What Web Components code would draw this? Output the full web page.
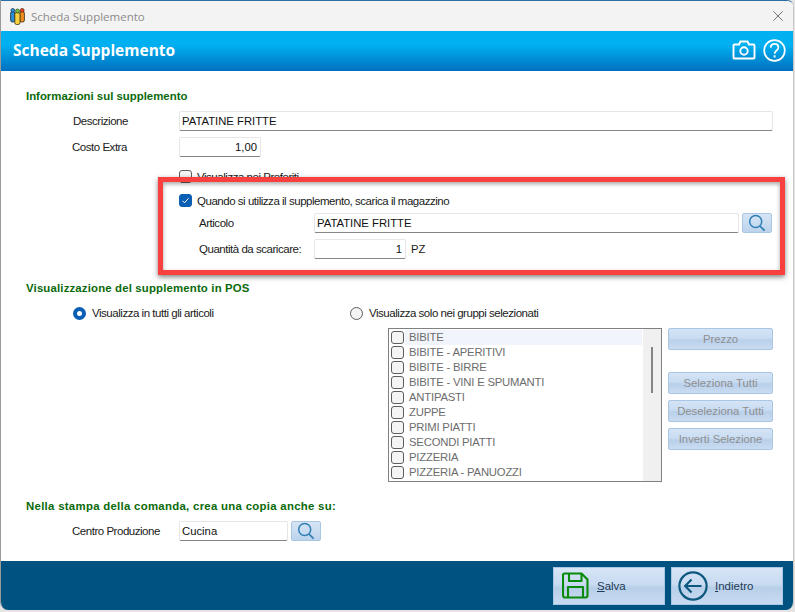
<!DOCTYPE html>
<html lang="it"><head><meta charset="utf-8"><title>Scheda Supplemento</title>
<style>
html,body{margin:0;padding:0;background:#e4e4e4;}
body{width:795px;height:612px;overflow:hidden;font:11.3px "Liberation Sans",Arial,sans-serif;color:#1a1a1a;}
</style></head><body>
<x-window>
  <x-titlebar slot="title">Scheda Supplemento</x-titlebar>
  <x-header slot="header">Scheda Supplemento</x-header>

  <x-section>Informazioni sul supplemento</x-section>
  <x-row h="20" top="8"><x-label w="106" x="47">Descrizione</x-label><x-input w="594">PATATINE FRITTE</x-input></x-row>
  <x-row h="20" top="6"><x-label w="107" x="46">Costo Extra</x-label><x-input w="82" align="right">1,00</x-input></x-row>
  <x-row h="13" top="13"><x-check style="margin-left:153px">Visualizza nei Preferiti</x-check></x-row>
  <x-row h="13" top="11"><x-check checked style="margin-left:153px">Quando si utilizza il supplemento, scarica il magazzino</x-check></x-row>
  <x-row h="20" top="6"><x-label w="115" x="173">Articolo</x-label><x-input w="425">PATATINE FRITTE</x-input><x-search></x-search></x-row>
  <x-row h="20" top="6"><x-label w="115" x="173">Quantità da scaricare:</x-label><x-input w="92" align="right">1</x-input><x-unit>PZ</x-unit></x-row>

  <x-section style="margin-top:22px;letter-spacing:.16px">Visualizzazione del supplemento in POS</x-section>
  <x-row h="14" top="11"><x-radio checked style="margin-left:47px;width:277px">Visualizza in tutti gli articoli</x-radio><x-radio>Visualizza solo nei gruppi selezionati</x-radio></x-row>
  <x-groups>
    <x-listbox>
      <x-item active>BIBITE</x-item><x-item>BIBITE - APERITIVI</x-item><x-item>BIBITE - BIRRE</x-item><x-item>BIBITE - VINI E SPUMANTI</x-item><x-item>ANTIPASTI</x-item><x-item>ZUPPE</x-item><x-item>PRIMI PIATTI</x-item><x-item>SECONDI PIATTI</x-item><x-item>PIZZERIA</x-item><x-item>PIZZERIA - PANUOZZI</x-item>
    </x-listbox>
    <x-sidebtns>
      <x-btn style="margin-bottom:22px">Prezzo</x-btn>
      <x-btn style="margin-bottom:6px">Seleziona Tutti</x-btn>
      <x-btn style="margin-bottom:6px">Deseleziona Tutti</x-btn>
      <x-btn>Inverti Selezione</x-btn>
    </x-sidebtns>
  </x-groups>

  <x-section style="margin-top:17px;letter-spacing:.29px">Nella stampa della comanda, crea una copia anche su:</x-section>
  <x-row h="20" top="8"><x-label w="107" x="46">Centro Produzione</x-label><x-input w="109">Cucina</x-input><x-search></x-search></x-row>

  <x-footer slot="footer">
    <x-action icon="save" key="S" rest="alva"></x-action>
    <x-action icon="back" key="I" rest="ndietro"></x-action>
  </x-footer>
  <x-annotation slot="overlay"></x-annotation>
</x-window>

<script>
function def(name, css, html, init){
  customElements.define(name, class extends HTMLElement{
    connectedCallback(){
      if(this.shadowRoot) return;
      const r=this.attachShadow({mode:'open'});
      r.innerHTML='<style>'+css+'</style>'+(typeof html==='function'?html(this):html);
      if(init) init(this,r);
    }
  });
}
const LENS='<svg width="20" height="20" viewBox="0 0 20 20" fill="none"><circle cx="8.700" cy="8.500" r="6" stroke="#2f7fb5" stroke-width="1.500"/><path d="M13 13l4.500 4.700" stroke="#2f7fb5" stroke-width="1.800"/></svg>';
const TXT='font-size:11.500px;letter-spacing:-.47px;';

def('x-window',`:host{display:block;position:relative;width:795px;height:612px;box-sizing:border-box;overflow:hidden;background:#e4e4e4}
.w{position:relative;box-sizing:border-box;margin:0;width:794px;height:610px;background:#fff;border-top:1px solid #2a6ea5;border-left:1px solid #9a9a9a;border-right:1px solid #c8c8c8;border-radius:0 7px 8px 8px;overflow:hidden;display:flex;flex-direction:column}
.b{flex:1;padding:18px 0 0 25px;min-height:0;display:flex;flex-direction:column}`,
`<div class="w"><slot name="title"></slot><slot name="header"></slot><div class="b"><slot></slot></div><slot name="footer"></slot></div><slot name="overlay"></slot>`);

def('x-titlebar',`:host{display:flex;align-items:center;height:30px;flex:none;background:#f3f3f3;color:#8c8c8c;font:11.500px "Open Sans",sans-serif;padding-left:9px;box-sizing:border-box}
svg{margin-right:6px;flex:none}.x{margin-left:auto;margin-right:10px}`,
`<svg width="15" height="17" viewBox="0 0 15 17"><rect x=".6" y="3.500" width="4.300" height="10.500" rx="1.800" fill="#2b8fd8" stroke="#13233a" stroke-width=".8"/><rect x="9.800" y="3.500" width="4.600" height="10.500" rx="1.800" fill="#ef8f1f" stroke="#3a2508" stroke-width=".8"/><rect x="4.800" y="4.500" width="5.200" height="12" rx="1.800" fill="#f8d040" stroke="#3a2f08" stroke-width=".8"/><circle cx="2.800" cy="2.300" r="1.900" fill="#2b8fd8" stroke="#13233a" stroke-width=".6"/><circle cx="12.200" cy="2.300" r="1.900" fill="#e8441f" stroke="#3a1508" stroke-width=".6"/><circle cx="7.500" cy="3" r="2" fill="#6fbf3f" stroke="#1f3a12" stroke-width=".6"/></svg><slot></slot><svg class="x" width="10" height="10" viewBox="0 0 10 10"><path d="M.3.3l9.400 9.400M9.700.3L.3 9.700" stroke="#777" stroke-width="1" fill="none"/></svg>`);

def('x-header',`:host{display:flex;align-items:center;height:40px;flex:none;box-sizing:border-box;padding:0 7px 2px 12px;color:#fff;font:bold 15.500px "Open Sans",sans-serif;background:linear-gradient(#00b0f0 0,#00b0f0 35%,#0070c0 100%)}
.i{margin-left:auto;display:flex;gap:7px;align-items:center}`,
`<slot></slot><div class="i"><svg width="24" height="20" viewBox="0 0 24 20" fill="none" stroke="#fff" stroke-width="1.900"><path d="M2.500 4.500h4.500l1.500-3h7l1.500 3h4.500a1 1 0 0 1 1 1v12a1 1 0 0 1-1 1H2.500a1 1 0 0 1-1-1v-12a1 1 0 0 1 1-1z"/><circle cx="12" cy="11" r="3.700"/></svg><svg width="23" height="23" viewBox="0 0 23 23" fill="none" stroke="#fff" stroke-width="1.700"><circle cx="11.500" cy="11.500" r="10.300"/><path d="M7.700 8.700c0-2.300 1.700-3.800 3.900-3.800s3.800 1.400 3.800 3.500c0 3-3.800 3.200-3.800 6.300"/><path d="M11.600 16.300v2.100" stroke-width="1.900"/></svg></div>`);

def('x-section',`:host{display:block;height:14px;font:bold 11.400px/14px "Liberation Sans",Arial,sans-serif;color:#0b6a0b;flex:none;white-space:nowrap}`,`<slot></slot>`);

def('x-row',`:host{display:flex;align-items:center;flex:none;white-space:nowrap}`,`<slot></slot>`,(e)=>{
  e.style.height=(e.getAttribute('h')||20)+'px';
  e.style.marginTop=(e.getAttribute('top')||0)+'px';
});

def('x-label',`:host{display:block;line-height:20px;box-sizing:border-box;white-space:nowrap;${TXT}}`,`<slot></slot>`,(e)=>{
  const x=+e.getAttribute('x')||0, w=+e.getAttribute('w')||0;
  e.style.marginLeft=x+'px'; e.style.width=w+'px';
});

def('x-unit',`:host{display:block;margin-left:5px;line-height:20px}`,`<slot></slot>`);

def('x-input',`:host{display:block;box-sizing:border-box;height:20px;line-height:18px;background:#fff;border:1px solid #e6e6e6;border-bottom:1px solid #858585;border-radius:2px;padding:0 2px;white-space:nowrap;overflow:hidden;color:#111}`,`<slot></slot>`,(e)=>{
  e.style.width=e.getAttribute('w')+'px';
  if(e.getAttribute('align')==='right'){e.style.textAlign='right';e.style.paddingRight='3px'}
});

def('x-search',`:host{display:flex;align-items:center;justify-content:center;box-sizing:border-box;margin-left:3px;width:30px;height:20px;background:linear-gradient(#d6e5f5,#bcd3ec);border:1px solid #a9c6e2;border-radius:2px}`,LENS);

const BOX='box-sizing:border-box;width:13px;height:13px;flex:none;';
def('x-check',`:host{display:flex;align-items:center;white-space:nowrap;gap:5px;${TXT}}
.b{${BOX}border:1px solid #5d5d5d;border-radius:3px;background:#f4f4f4;display:flex;align-items:center;justify-content:center}
:host([checked]) .b{background:#0a5fb4;border-color:#0a5fb4}`,
`<span class="b"><svg width="9" height="9" viewBox="0 0 9 9" fill="none"><path d="M1.500 4.800l2 2 4-4.500" stroke="#fff" stroke-width="1"/></svg></span><slot></slot>`,
(e,r)=>{ if(!e.hasAttribute('checked')) r.querySelector('svg').remove(); });

def('x-radio',`:host{display:flex;align-items:center;white-space:nowrap;gap:6px;box-sizing:border-box;${TXT}}
.b{${BOX}border:1px solid #5d5d5d;border-radius:50%;background:#f4f4f4}
:host([checked]) .b{border:4px solid #0a5fb4;background:#fff}`,
`<span class="b"></span><slot></slot>`);

def('x-groups',`:host{display:flex;margin:8px 0 0 362px;gap:6px;flex:none;height:154px}`,`<slot></slot>`);

def('x-listbox',`:host{display:block;position:relative;box-sizing:border-box;width:274px;height:154px;border:1px solid #808080;background:#fff;padding:1px 19px 0 1px;overflow:hidden}
.t{position:absolute;right:0;top:0;bottom:0;width:18px;background:#f0f0f0}
.t i{position:absolute;left:8px;top:18px;width:2px;height:46px;background:#858585}`,
`<slot></slot><div class="t"><i></i></div>`);

def('x-item',`:host{display:flex;align-items:center;height:15px;white-space:nowrap;color:#6d6d6d;gap:1px;padding-left:1px;letter-spacing:-.2px}
.b{${BOX}border:1px solid #5d5d5d;border-radius:3px;background:#f4f4f4}
.l{flex:1;line-height:15px;padding-left:4px}
:host([active]) .l{background:#f1f5fb}`,`<span class="b"></span><span class="l"><slot></slot></span>`);

def('x-sidebtns',`:host{display:flex;flex-direction:column;width:105px}`,`<slot></slot>`);

def('x-btn',`:host{display:flex;align-items:center;justify-content:center;height:22px;flex:none;box-sizing:border-box;border:1px solid #a9c6e2;border-radius:2px;color:#8f8f8f;white-space:nowrap;background:linear-gradient(#d5e4f6 0,#c9dcf2 45%,#b9d0ea 55%,#c9dcf2 100%)}`,`<slot></slot>`);

def('x-footer',`:host{display:flex;flex:none;justify-content:flex-end;align-items:center;gap:6px;height:49px;background:#005380;padding:0 10px 0 0;box-sizing:border-box}`,`<slot></slot>`);

const ICONS={
 save:`<svg width="27" height="27" viewBox="0 0 27 27" fill="none" stroke="#0a8a0a" stroke-width="2.100" stroke-linejoin="round"><path d="M2.500 1.500h17l6 6v16a2 2 0 0 1-2 2H3a2 2 0 0 1-2-2V3a1.500 1.500 0 0 1 1.500-1.500z"/><path d="M7 1.500v7.500h12.500v-7.500"/><path d="M6 25.500v-10.500h15v10.500"/></svg>`,
 back:`<svg width="30" height="30" viewBox="0 0 30 30" fill="none" stroke="#0d587f" stroke-width="2.200"><circle cx="15" cy="15" r="13.600"/><path d="M23.500 15h-16M13.500 8.500l-6.300 6.500 6.300 6.500"/></svg>`
};
def('x-action',`:host{display:flex;align-items:center;box-sizing:border-box;width:112px;height:38px;border:1px solid #a9c6e2;background:linear-gradient(#d7e5f6 0,#c8dbf1 45%,#b8cfe9 55%,#c8dbf1 100%);color:#1d3a57;white-space:nowrap;position:relative}
.i{display:flex;align-items:center;justify-content:center;width:42px;flex:none}
.t{margin-left:1px;font-size:11.500px}u{text-decoration:underline}`,
e=>`<span class="i">${ICONS[e.getAttribute('icon')]}</span><span class="t"><u>${e.getAttribute('key')}</u>${e.getAttribute('rest')}</span>`);

def('x-annotation',`:host{display:block;position:absolute;left:158px;top:177px;width:627px;height:98px;box-sizing:border-box;border:5px solid #f9403f;box-shadow:0 2px 5px rgba(0,0,0,.5),inset 0 2px 4px rgba(0,0,0,.35);pointer-events:none}`,``);
</script>
</body></html>
